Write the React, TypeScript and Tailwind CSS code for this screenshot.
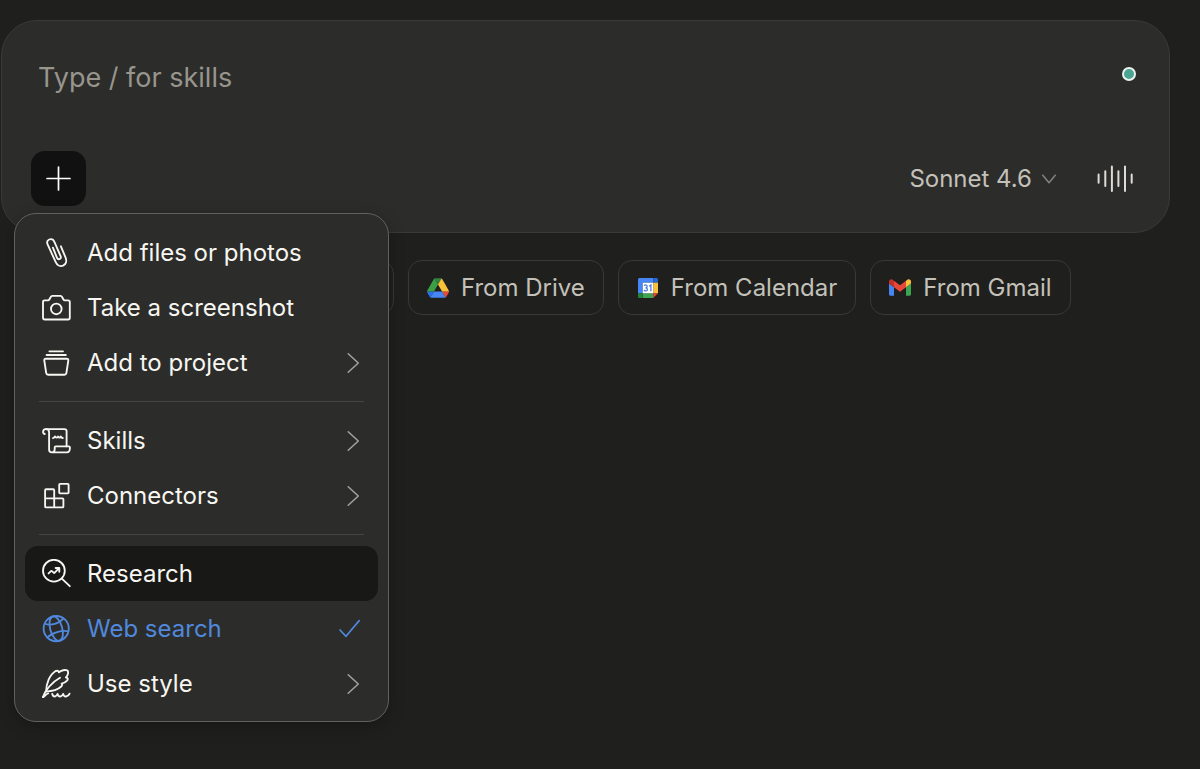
import type { ReactNode } from "react";

function Glyph({ children }: { children: ReactNode }) {
  return (
    <svg
      viewBox="0 0 30 30"
      className="size-[30px] shrink-0"
      fill="none"
      stroke="currentColor"
      strokeWidth="1.85"
      strokeLinecap="round"
      strokeLinejoin="round"
      aria-hidden="true"
    >
      {children}
    </svg>
  );
}

const PaperclipIcon = () => (
  <Glyph>
    <path d="M19.9 8.3 24.6 19.6C26 23.2 24.8 26.6 22 27.7C19.2 28.7 16 27.3 14.6 23.9L6.6 6.4C5.7 4.2 6.4 2.3 8.2 1.5C10.2.8 12.5 1.6 13.4 3.9L19.6 18.2C20.2 19.6 19.8 20.6 18.7 21C17.6 21.4 16.4 20.9 15.9 19.6L11.9 9.6" />
  </Glyph>
);

const CameraIcon = () => (
  <Glyph>
    <path d="M3.7 7.3H6.9C7.7 7.3 8.1 6.9 8.5 6.2L9.7 4C10.1 3.2 10.5 2.9 11.3 2.9H19.5C20.3 2.9 20.7 3.2 21.1 4L22.3 6.2C22.7 6.9 23.1 7.3 23.9 7.3H27.1C28.2 7.3 28.8 7.9 28.8 9V24.8C28.8 25.9 28.2 26.5 27.1 26.5H3.7C2.6 26.5 2 25.9 2 24.8V9C2 7.9 2.6 7.3 3.7 7.3Z" />
    <circle cx="15.3" cy="15.9" r="5.3" />
  </Glyph>
);

const ProjectIcon = () => (
  <Glyph>
    <path d="M8.4 3.3H22M5.6 7H24.8M4.9 10.7H25.7C27 10.7 27.5 11.3 27.3 12.5L25.4 25C25.2 26.2 24.6 26.7 23.5 26.7H7.1C6 26.7 5.4 26.2 5.2 25L3.3 12.5C3.1 11.3 3.6 10.7 4.9 10.7Z" />
  </Glyph>
);

const SkillsIcon = () => (
  <Glyph>
    <path d="M3.8 8C2.6 7.7 2 6.7 2.1 5.6C2.2 4.1 3.3 3.1 4.7 3.1H23.4C24.8 3.1 25.6 3.9 25.6 5.3V20.2" />
    <path d="M5 3.1C6.9 3.1 8.1 4.4 8.1 6.3V23.4C8.1 25.2 9.2 26.3 10.8 26.3H25.6C27.7 26.3 28.9 24.6 28.9 22.2V21.4C28.9 20.6 28.6 20.3 27.8 20.3H14.8C14 20.3 13.7 20.7 13.7 21.5V23.2C13.7 25.1 12.7 26.3 10.8 26.3" />
    <path d="M12 12.1C13 12 13.6 11.3 14 10.4C14.8 11.9 16 12.2 17 10.5C17.9 12.1 19 12.1 19.7 10.4C20.2 11.6 21 12 21.8 12" />
  </Glyph>
);

const ConnectorsIcon = () => (
  <Glyph>
    <rect x="18.2" y="2.9" width="9.4" height="9.4" rx="0.8" />
    <path d="M13.2 17.3V9.2C13.2 8.6 12.8 8.2 12.2 8.2H5.1C4.5 8.2 4.1 8.6 4.1 9.2V25.4C4.1 26 4.5 26.4 5.1 26.4H21.4C22 26.4 22.4 26 22.4 25.4V18.3C22.4 17.7 22 17.3 21.4 17.3H4.1M13.2 17.3V26.4" />
  </Glyph>
);

const ResearchIcon = () => (
  <Glyph>
    <circle cx="12.9" cy="11.7" r="10.9" />
    <path d="M20.8 19.6 28.8 27.2M7.6 14.4 9.9 12.1C10.3 11.7 10.6 11.7 11 12.1L12.6 13.7C13 14.1 13.3 14.1 13.7 13.7L18.1 9.2M14.6 9H18.3V12.7" />
  </Glyph>
);

const GlobeIcon = () => (
  <Glyph>
    <circle cx="15.2" cy="14.6" r="12.6" />
    <g transform="rotate(-16 15.2 14.6)">
      <ellipse cx="15.2" cy="14.6" rx="6" ry="12.6" />
      <path d="M5.6 6.8C10.6 10.6 19.8 10.6 24.8 6.8M4.4 20.6C10 17.4 20.4 17.4 26 20.6" />
    </g>
  </Glyph>
);

const FeatherIcon = () => (
  <Glyph>
    <path d="M2 28.1C4 21.5 10.5 13.5 19 8.8" />
    <path d="M5.2 21.8C5.2 15 8.4 6 14.3 2.2C16.4 1.2 17.8 1.8 17.9 3.4C20 1.3 24.3.4 26.4 1.5C27.7 2.6 27.2 6.5 24.9 8.5C27 8.5 27.2 10.2 26 11.7C24.9 13 23 14.3 20.6 14.7C21.6 15.2 21.3 16.4 20.2 17.5C17.3 20.3 11.5 22.3 4.9 22.6" />
    <path d="M2 28.1C3.6 27.4 5.2 24.8 7.2 24.4M11.2 24.9C11.8 26.8 12.8 27.7 13.9 27.5C15.2 27.3 16.2 26 16.6 24.9C17.1 26.7 18.1 27.7 19.4 27.5C20.8 27.3 21.8 26 22.2 24.9C22.6 26.7 23.7 27.7 25 27.5C26.7 27.3 28 26.2 28.6 24.7" />
  </Glyph>
);

const ChevronRight = () => (
  <svg viewBox="0 0 14 22" className="h-[22px] w-[14px] text-[#a5a39c]" fill="none" stroke="currentColor" strokeWidth="1.5" strokeLinecap="round" strokeLinejoin="round" aria-hidden="true">
    <path d="M2.2 1.8 12.3 11 2.2 20.2" />
  </svg>
);

const CheckIcon = () => (
  <svg viewBox="0 0 22 22" className="size-[22px]" fill="none" stroke="currentColor" strokeWidth="1.7" strokeLinecap="round" strokeLinejoin="round" aria-hidden="true">
    <path d="M2 12 8 18.3 21.2 2.6" />
  </svg>
);

const DriveIcon = () => (
  <svg viewBox="0 0 87.3 78" className="h-5 w-[22px] shrink-0" aria-hidden="true">
    <path fill="#2a6ff0" d="m6.6 66.85 3.85 6.65c.8 1.4 1.95 2.5 3.3 3.3l13.75-23.8H0c0 1.55.4 3.1 1.2 4.5z" />
    <path fill="#3d9f45" d="M43.65 25 29.9 1.2c-1.35.8-2.5 1.9-3.3 3.3L1.2 48.5C.4 49.9 0 51.45 0 53h27.5z" />
    <path fill="#e5493a" d="M73.55 76.8c1.35-.8 2.5-1.9 3.3-3.3l1.6-2.75L86.1 57.5c.8-1.4 1.2-2.95 1.2-4.5H59.8l5.85 11.5z" />
    <path fill="#2d8540" d="M43.65 25 57.4 1.2C56.05.4 54.5 0 52.9 0H34.4c-1.6 0-3.15.45-4.5 1.2z" />
    <path fill="#4585f4" d="M59.8 53H27.5L13.75 76.8c1.35.8 2.9 1.2 4.5 1.2h50.8c1.6 0 3.15-.45 4.5-1.2z" />
    <path fill="#fbc03a" d="M73.4 26.5 60.7 4.5c-.8-1.4-1.95-2.5-3.3-3.3L43.65 25 59.8 53h27.45c0-1.55-.4-3.1-1.2-4.5z" />
  </svg>
);

const CalendarIcon = () => (
  <svg viewBox="-1 0 22 20" className="h-5 w-[22px] shrink-0" aria-hidden="true">
    <path fill="#4585f4" d="M1.6 0H15.3V4.7H4.7V15.3H0V1.6C0 .7.7 0 1.6 0Z" />
    <path fill="#2866d5" d="M15.3 0H18.4C19.3 0 20 .7 20 1.6V4.7H15.3Z" />
    <path fill="#fbc03a" d="M15.3 4.7H20V15.3H15.3Z" />
    <path fill="#3da551" d="M4.7 15.3H15.3V20H4.7Z" />
    <path fill="#25833c" d="M0 15.3H4.7V20H1.6C.7 20 0 19.3 0 18.4Z" />
    <path fill="#e5493a" d="M15.3 15.3H20L15.3 20Z" />
    <path fill="#fff" d="M4.7 4.7H15.3V15.3H4.7Z" />
    <g fill="none" stroke="#3d74dc" strokeWidth="1.2">
      <path d="M6.2 7.9C6.6 6.6 9.2 6.6 9.2 8.3C9.2 9.4 8.4 9.8 7.5 9.8C8.5 9.8 9.4 10.3 9.4 11.4C9.4 13.3 6.4 13.4 6 11.8" />
      <path d="M11.2 8.2 12.9 7V13.2" />
    </g>
  </svg>
);

const GmailIcon = () => (
  <svg viewBox="52 42 88 66" className="h-[17px] w-[22px] shrink-0" aria-hidden="true">
    <path fill="#4585f4" d="M58 108h14V74L52 59v43c0 3.3 2.7 6 6 6" />
    <path fill="#3da551" d="M120 108h14c3.3 0 6-2.7 6-6V59l-20 15" />
    <path fill="#fbc03a" d="M120 48v26l20-15v-8c0-7.4-8.5-11.6-14.4-7.2" />
    <path fill="#e5493a" d="M72 74V48l24 18 24-18v26L96 92" />
    <path fill="#c5302a" d="M52 51v8l20 15V48l-5.6-4.2C60.5 39.4 52 43.6 52 51" />
  </svg>
);

type Item = {
  label: string;
  icon: ReactNode;
  trailing?: "chevron" | "check";
  state?: "highlighted" | "checked";
};

const groups: Item[][] = [
  [
    { label: "Add files or photos", icon: <PaperclipIcon /> },
    { label: "Take a screenshot", icon: <CameraIcon /> },
    { label: "Add to project", icon: <ProjectIcon />, trailing: "chevron" },
  ],
  [
    { label: "Skills", icon: <SkillsIcon />, trailing: "chevron" },
    { label: "Connectors", icon: <ConnectorsIcon />, trailing: "chevron" },
  ],
  [
    { label: "Research", icon: <ResearchIcon />, state: "highlighted" },
    { label: "Web search", icon: <GlobeIcon />, trailing: "check", state: "checked" },
    { label: "Use style", icon: <FeatherIcon />, trailing: "chevron" },
  ],
];

function MenuItem({ item }: { item: Item }) {
  const color = item.state === "checked" ? "text-[#5088dd]" : "text-[#f7f6f1]";
  const surface = item.state === "highlighted" ? "bg-[#181816]" : "hover:bg-[#181816]";
  return (
    <button
      type="button"
      role={item.trailing === "check" ? "menuitemcheckbox" : "menuitem"}
      aria-checked={item.trailing === "check" ? true : undefined}
      aria-haspopup={item.trailing === "chevron" ? "menu" : undefined}
      className={`flex h-[55px] w-full items-center gap-4 rounded-[13px] pr-[18px] pl-4 text-left ${color} ${surface}`}
    >
      {item.icon}
      <span className="flex-1">{item.label}</span>
      {item.trailing === "chevron" && <ChevronRight />}
      {item.trailing === "check" && <CheckIcon />}
    </button>
  );
}

function AddMenu() {
  return (
    <div
      role="menu"
      aria-label="Add"
      className="absolute top-full -left-[17px] z-10 mt-[7px] w-[375px] rounded-[22px] border border-[#61615e] bg-[#2c2c2a] px-[10px] pt-[11px] pb-[10px] shadow-[0_4px_16px_rgba(0,0,0,0.25)]"
    >
      {groups.map((group, index) => (
        <div key={group[0].label} role="group">
          {index > 0 && <div role="separator" className="mx-[14px] my-[11px] h-px bg-[#454542]" />}
          {group.map((item) => (
            <MenuItem key={item.label} item={item} />
          ))}
        </div>
      ))}
    </div>
  );
}

function Chip({ icon, label }: { icon: ReactNode; label: string }) {
  return (
    <button
      type="button"
      className="flex h-[55px] items-center gap-3 rounded-[14px] border border-[#383836] px-[18px] whitespace-nowrap text-[#c3c1b9]"
    >
      {icon}
      {label}
    </button>
  );
}

export default function App() {
  return (
    <main className="min-h-screen bg-[#1f1f1d] pt-5 pr-[30px] pl-px font-['Inter',sans-serif] text-[24px] leading-8">
      <form
        onSubmit={(event) => event.preventDefault()}
        className="rounded-[36px] border border-[#3a3a38] bg-[#2c2c2a] pt-[36px] pr-[33px] pb-[26px] pl-[29px]"
      >
        <div className="flex items-start justify-between">
          <input
            type="text"
            aria-label="Message"
            placeholder="Type / for skills"
            className="ml-[7px] h-10 min-w-0 flex-1 bg-transparent text-[27px] text-[#f7f6f1] outline-none placeholder:text-[#97958c]"
          />
          <span className="mt-[10px] size-[14px] rounded-full border-2 border-[#e9f3ef] bg-[#4ba391]" />
        </div>
        <div className="mt-[54px] flex items-center justify-between pr-[2px]">
          <div className="relative">
            <button
              type="button"
              aria-label="Open add menu"
              aria-expanded="true"
              className="flex size-[55px] items-center justify-center rounded-[14px] bg-[#111111] text-white"
            >
              <svg viewBox="0 0 25 25" className="size-[25px]" stroke="currentColor" strokeWidth="1.7" strokeLinecap="round" aria-hidden="true">
                <path d="M12.5 1V24M1 12.5H24" />
              </svg>
            </button>
            <AddMenu />
          </div>
          <div className="flex items-center gap-10">
            <button type="button" className="flex items-center gap-[10px] text-[#c3c1b9]">
              Sonnet 4.6
              <svg viewBox="0 0 14 10" className="h-[10px] w-[14px] text-[#85837c]" fill="none" stroke="currentColor" strokeWidth="1.5" strokeLinecap="round" strokeLinejoin="round" aria-hidden="true">
                <path d="M.8 1.2 7 8.8 13.2 1.2" />
              </svg>
            </button>
            <button type="button" aria-label="Use voice mode" className="text-[#dddbd3]">
              <svg viewBox="0 0 38 28" className="h-7 w-[38px]" stroke="currentColor" strokeWidth="2" strokeLinecap="round" aria-hidden="true">
                <path d="M2.6 9.5V17.7M9.3 6.3V21.1M15.9 1.5V26.1M22.4 6.3V21.1M29 1.5V26.1M35.7 9.5V17.7" />
              </svg>
            </button>
          </div>
        </div>
      </form>
      <div className="mt-[27px] flex gap-[14px] pl-[273px]">
        <div className="h-[55px] w-[120px] shrink-0 rounded-[14px] border border-[#383836]" />
        <Chip icon={<DriveIcon />} label="From Drive" />
        <Chip icon={<CalendarIcon />} label="From Calendar" />
        <Chip icon={<GmailIcon />} label="From Gmail" />
      </div>
    </main>
  );
}
